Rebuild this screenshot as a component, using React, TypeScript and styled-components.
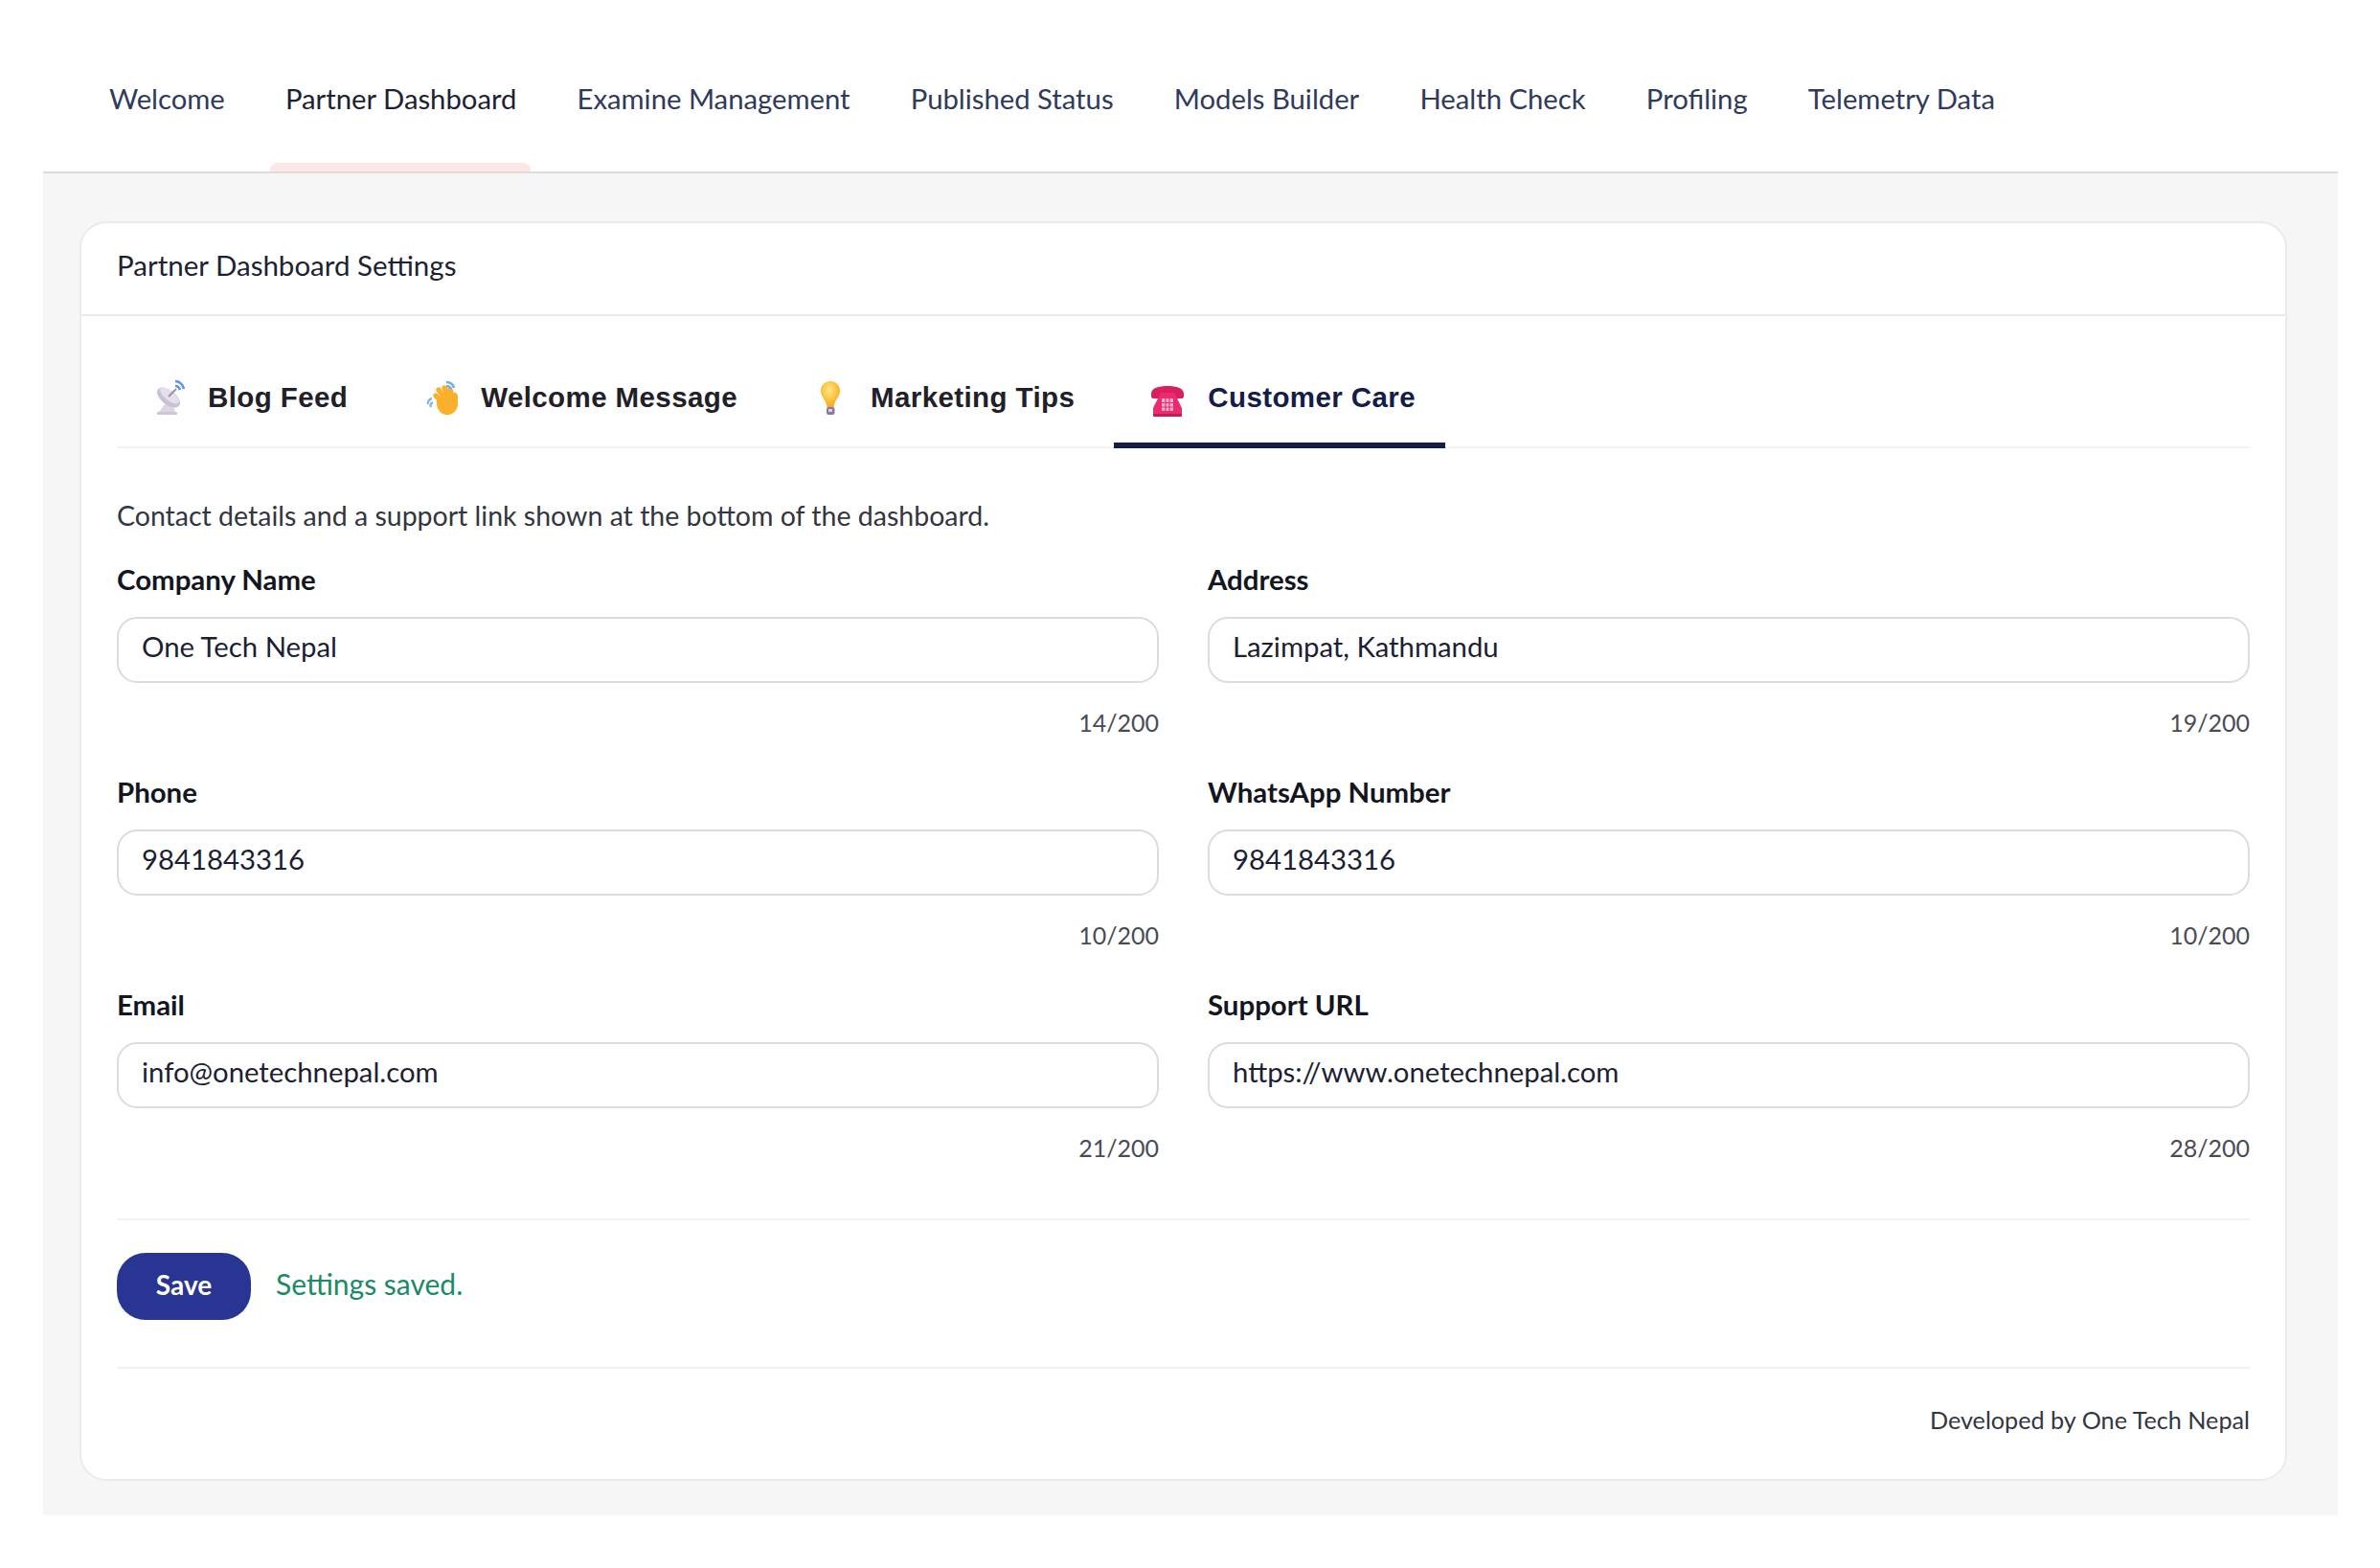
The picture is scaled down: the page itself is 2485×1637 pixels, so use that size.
import styled, { createGlobalStyle } from "styled-components";

const GlobalStyle = createGlobalStyle`
  html, body {
    margin: 0;
    padding: 0;
    background: #fff;
  }
  body {
    font-family: "Lato", "Open Sans", sans-serif;
    color: #1c1f33;
  }
`;

const Page = styled.div`
  width: 2396px;
  margin-left: 45px;
`;

const TopNav = styled.nav`
  display: flex;
  gap: 63.2px;
  height: 181px;
  padding: 0 0 0 69px;
  border-bottom: 2px solid #dcdcdc;
  box-sizing: border-box;
`;

const NavItem = styled.a<{ $active?: boolean }>`
  position: relative;
  display: flex;
  align-items: center;
  height: 100%;
  padding-top: 25px;
  font-size: 29.25px;
  color: ${(p) => (p.$active ? "#1d2233" : "#2f3a5c")};
  white-space: nowrap;
  box-sizing: border-box;

  ${(p) =>
    p.$active &&
    `&::after {
      content: "";
      position: absolute;
      left: -16px;
      right: -15px;
      bottom: 0;
      height: 9px;
      background: #fde6e6;
      border-radius: 8px 8px 0 0;
    }`}
`;

const Body = styled.main`
  background: #f6f6f7;
  padding: 50px 53px 37px 38px;
  height: 1401px;
  box-sizing: border-box;
`;

const Card = styled.section`
  background: #fff;
  border: 2px solid #ebebeb;
  border-radius: 28px;
  height: 1315px;
  box-sizing: border-box;
`;

const CardHeader = styled.header`
  display: flex;
  align-items: center;
  height: 87px;
  padding: 0 37px 8px;
  border-bottom: 2px solid #ebebeb;
  font-size: 29.5px;
  color: #1d2233;
`;

const CardBody = styled.div`
  padding: 0 37px;
`;

const Tabs = styled.div`
  display: flex;
  gap: 11px;
  height: 138px;
  border-bottom: 2px solid #f2f2f2;
  box-sizing: border-box;
`;

const Tab = styled.button<{ $active?: boolean }>`
  position: relative;
  display: flex;
  align-items: center;
  gap: 21px;
  padding: 34px 33px 0 37px;
  margin: 0;
  border: 0;
  background: transparent;
  font-family: "Liberation Sans", Arial, sans-serif;
  font-weight: 700;
  font-size: 29.5px;
  letter-spacing: 0.4px;
  color: ${(p) => (p.$active ? "#141d4a" : "#1f2028")};
  white-space: nowrap;
  box-sizing: border-box;

  ${(p) =>
    p.$active &&
    `&::after {
      content: "";
      position: absolute;
      left: -3px;
      right: 2px;
      bottom: -2px;
      height: 6px;
      background: #141d4a;
    }`}
`;

const Intro = styled.p`
  margin: 0;
  padding-top: 52px;
  font-size: 28.5px;
  line-height: 36px;
  color: #33363f;
`;

const FieldGrid = styled.div`
  display: grid;
  grid-template-columns: 1fr 1fr;
  column-gap: 51px;
  margin-top: 31px;
`;

const Field = styled.div`
  display: flex;
  flex-direction: column;
  height: 222px;
`;

const Label = styled.label`
  font-size: 29.4px;
  font-weight: 700;
  line-height: 36px;
  color: #14161f;
`;

const Input = styled.input`
  margin-top: 21px;
  width: 100%;
  height: 69px;
  padding: 0 24px 8px;
  border: 2px solid #dcdcdc;
  border-radius: 21px;
  box-sizing: border-box;
  font-family: inherit;
  font-size: 29.3px;
  color: #1c1f33;
  background: #fff;
  outline: none;
`;

const Counter = styled.div`
  margin-top: 26px;
  text-align: right;
  font-size: 25px;
  line-height: 30px;
  color: #4a4c55;
`;

const SaveRow = styled.div`
  display: flex;
  align-items: center;
  gap: 26px;
  height: 157px;
  margin-top: 19px;
  padding-bottom: 16px;
  border-top: 2px solid #f2f2f2;
  border-bottom: 2px solid #f2f2f2;
  box-sizing: border-box;
`;

const SaveButton = styled.button`
  width: 140px;
  height: 70px;
  padding: 0 0 4px;
  border: 0;
  border-radius: 30px;
  background: #283593;
  color: #fff;
  font-family: inherit;
  font-size: 28px;
  font-weight: 700;
`;

const SavedNote = styled.span`
  margin-bottom: 6px;
  font-size: 30px;
  color: #1b8a66;
`;

const Credit = styled.div`
  padding-top: 35px;
  text-align: right;
  font-size: 25.2px;
  line-height: 36px;
  color: #33363f;
`;

const IconBox = styled.svg`
  width: 37px;
  height: 42px;
  flex: none;
  overflow: visible;
`;

const DishIcon = () => (
  <IconBox viewBox="0 0 37 42">
    <path d="M13 28 L7 36 H24 L21 27Z" fill="#dcd6e4" />
    <rect x="5" y="36" width="21" height="3" rx="1" fill="#cdc6d8" />
    <ellipse cx="17" cy="21" rx="14" ry="7.5" transform="rotate(38 17 21)" fill="#c9c1d6" />
    <ellipse cx="18" cy="19" rx="12" ry="5" transform="rotate(38 18 19)" fill="#e4dfea" />
    <path d="M17 20 L25 12" stroke="#9a93aa" strokeWidth="2" />
    <path d="M24 9 C26 9 28 10 29 13 M24 4 C28 4 32 7 33 12" stroke="#5b93ee" strokeWidth="2.6" fill="none" />
  </IconBox>
);

const WaveIcon = () => (
  <IconBox viewBox="0 0 37 42">
    <g stroke="#fbb02b" strokeWidth="5.4" strokeLinecap="round">
      <path d="M17 25 L11 19" />
      <path d="M20 21 L14 13" />
      <path d="M24 19 L20 11" />
      <path d="M28 19 L26 13" />
    </g>
    <path
      d="M12 24 L21 15 L31 16 C33 16 34 18 34 20 L34 29 C33 36 27 40 21 39 C15 38 11 31 12 24Z"
      fill="#fbb02b"
    />
    <path d="M7 22 C4 23 2 26 3 28 M8 26 C6 27 5 29 6 31" stroke="#7fb6ee" strokeWidth="2.4" fill="none" />
    <path d="M22 5 C26 5 29 7 30 11 M22 9 C24 9 26 10 27 12" stroke="#6fb0ee" strokeWidth="2.6" fill="none" />
  </IconBox>
);

const BulbIcon = () => (
  <IconBox viewBox="0 0 37 42">
    <defs>
      <radialGradient id="bulbGlow" cx="45%" cy="35%" r="65%">
        <stop offset="0%" stopColor="#ffe68a" />
        <stop offset="60%" stopColor="#fcc23a" />
        <stop offset="100%" stopColor="#f6a623" />
      </radialGradient>
    </defs>
    <path
      d="M16 4 C9 4 5.500 10 6 15 C6.500 21 12 24 12.500 31 H19.500 C20 24 25.500 21 26 15 C26.500 10 23 4 16 4Z"
      fill="url(#bulbGlow)"
    />
    <rect x="12" y="31" width="8.500" height="8" rx="2" fill="#8b78a8" />
    <rect x="14" y="33" width="4" height="3" fill="#d9d0e4" />
  </IconBox>
);

const PhoneIcon = () => (
  <IconBox viewBox="0 0 37 42">
    <g transform="translate(-3 0)">
      <path d="M2 17 C2 11 10 9 19 9 C28 9 36 11 36 17 V20 C36 21 35 22 34 22 H28 C27 22 26 21 26 20 V16 H12 V20 C12 21 11 22 10 22 H4 C3 22 2 21 2 20Z" fill="#d91f5e" />
      <path d="M12 16 H26 L34 32 V39 H4 V32Z" fill="#ec2a70" />
      <rect x="4" y="38" width="30" height="3" rx="1" fill="#c31a52" />
      <rect x="13" y="22" width="12" height="13" rx="1" fill="#f9b3cc" />
      <path d="M17 22 V35 M21 22 V35 M13 26.500 H25 M13 31 H25" stroke="#ec2a70" strokeWidth="1.2" />
    </g>
  </IconBox>
);

const navLinks = [
  "Welcome",
  "Partner Dashboard",
  "Examine Management",
  "Published Status",
  "Models Builder",
  "Health Check",
  "Profiling",
  "Telemetry Data",
];

const tabs = [
  { label: "Blog Feed", icon: <DishIcon /> },
  { label: "Welcome Message", icon: <WaveIcon /> },
  { label: "Marketing Tips", icon: <BulbIcon /> },
  { label: "Customer Care", icon: <PhoneIcon />, active: true },
];

const fields = [
  { label: "Company Name", value: "One Tech Nepal" },
  { label: "Address", value: "Lazimpat, Kathmandu" },
  { label: "Phone", value: "9841843316" },
  { label: "WhatsApp Number", value: "9841843316" },
  { label: "Email", value: "info@onetechnepal.com" },
  { label: "Support URL", value: "https://www.onetechnepal.com" },
];

export default function App() {
  return (
    <Page>
      <GlobalStyle />
      <TopNav>
        {navLinks.map((link) => (
          <NavItem key={link} $active={link === "Partner Dashboard"}>
            {link}
          </NavItem>
        ))}
      </TopNav>
      <Body>
        <Card>
          <CardHeader>Partner Dashboard Settings</CardHeader>
          <CardBody>
            <Tabs>
              {tabs.map((tab) => (
                <Tab key={tab.label} $active={tab.active}>
                  {tab.icon}
                  {tab.label}
                </Tab>
              ))}
            </Tabs>
            <Intro>Contact details and a support link shown at the bottom of the dashboard.</Intro>
            <FieldGrid>
              {fields.map((field) => (
                <Field key={field.label}>
                  <Label>{field.label}</Label>
                  <Input defaultValue={field.value} />
                  <Counter>{field.value.length}/200</Counter>
                </Field>
              ))}
            </FieldGrid>
            <SaveRow>
              <SaveButton>Save</SaveButton>
              <SavedNote>Settings saved.</SavedNote>
            </SaveRow>
            <Credit>Developed by One Tech Nepal</Credit>
          </CardBody>
        </Card>
      </Body>
    </Page>
  );
}
